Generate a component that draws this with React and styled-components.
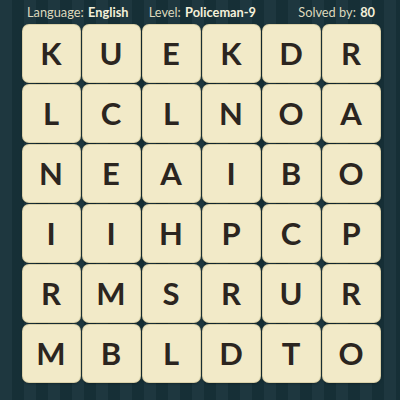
import React from "react";
import styled, { createGlobalStyle } from "styled-components";

const GlobalStyle = createGlobalStyle`
  html, body {
    margin: 0;
    padding: 0;
  }
  body {
    font-family: "Lato", "Liberation Sans", sans-serif;
  }
`;

const rows = ["KUEKDR", "LCLNOA", "NEAIBO", "IIHPCP", "RMSRUR", "MBLDTO"];

export default function App() {
  return (
    <Page>
      <GlobalStyle />
      <Header>
        <Info>
          Language: <Value>English</Value>
        </Info>
        <Info>
          Level: <Value>Policeman-9</Value>
        </Info>
        <Info>
          Solved by: <Value>80</Value>
        </Info>
      </Header>
      <Board>
        {rows.join("").split("").map((ch, i) => (
          <Tile key={i}>{ch}</Tile>
        ))}
      </Board>
    </Page>
  );
}

const Page = styled.div`
  width: 400px;
  height: 400px;
  overflow: hidden;
  background-color: #173139;
  background-image: repeating-linear-gradient(
    90deg,
    rgba(255, 255, 255, 0.03) 0px,
    rgba(255, 255, 255, 0.03) 12px,
    rgba(0, 0, 0, 0.05) 12px,
    rgba(0, 0, 0, 0.05) 24px
  );
  display: flex;
  flex-direction: column;
  align-items: center;
`;

const Header = styled.div`
  width: 350px;
  height: 25px;
  padding: 0 0 2px 2px;
  box-sizing: border-box;
  display: flex;
  align-items: center;
  justify-content: space-between;
  font-size: 12.8px;
  color: #dcd8bd;
`;

const Info = styled.span`
  white-space: pre;
  &:nth-child(2) {
    margin-right: 22px;
  }
`;

const Value = styled.b`
  font-weight: 700;
  color: #f4f0da;
  margin-left: 1px;
`;

const Board = styled.div`
  display: grid;
  grid-template-columns: repeat(6, 57px);
  grid-auto-rows: 57px;
  gap: 3px;
  margin-left: 2px;
`;

const Tile = styled.div`
  background: #f2eac8;
  border-radius: 6px;
  box-shadow: 0 0 0 1px #d9d0a8, 0 1px 3px rgba(0, 0, 0, 0.5);
  display: flex;
  align-items: center;
  justify-content: center;
  font-size: 31px;
  font-weight: 700;
  color: #2b2520;
  line-height: 1;
`;
